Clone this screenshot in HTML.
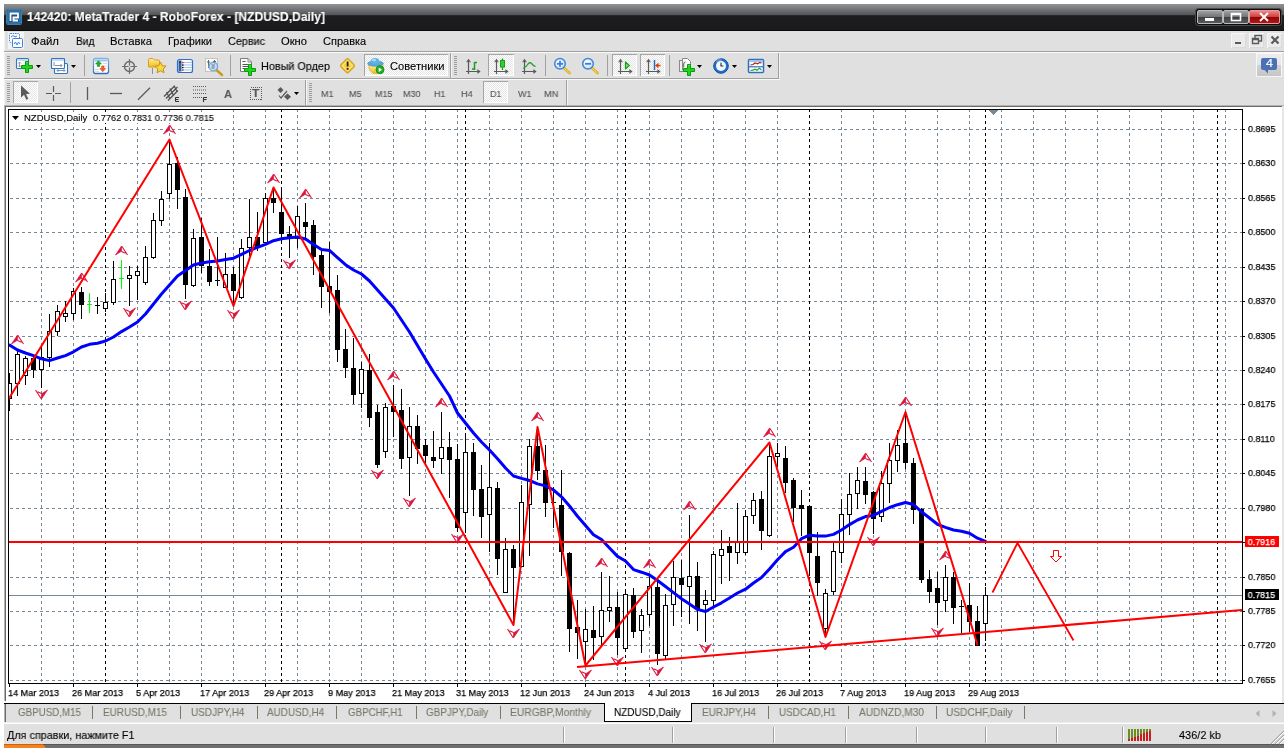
<!DOCTYPE html>
<html lang="ru"><head><meta charset="utf-8"><title>MetaTrader 4</title>
<style>
html,body{margin:0;padding:0;background:#fff;}
body{width:1288px;height:748px;position:relative;overflow:hidden;font-family:"Liberation Sans","DejaVu Sans",sans-serif;font-size:11px;color:#000;-webkit-text-stroke:0.25px currentColor;}
.abs{position:absolute;}
.pl{will-change:transform;position:absolute;left:1248px;font-size:9.8px;line-height:12px;height:12px;transform:scaleX(.915);transform-origin:0 0;white-space:nowrap;}
.pl.box{left:1245px;width:34px;padding-left:3px;height:11px;line-height:11px;color:#fff;}
.dl{will-change:transform;position:absolute;top:687px;font-size:9.8px;line-height:12px;white-space:nowrap;transform:scaleX(.93);transform-origin:0 0;}
.t{position:absolute;white-space:nowrap;will-change:transform;-webkit-text-stroke:0.12px currentColor;}
</style></head><body>

<svg width="1288" height="748" viewBox="0 0 1288 748" style="position:absolute;left:0;top:0" shape-rendering="crispEdges">
<defs><clipPath id="cc"><rect x="9" y="110" width="1233" height="573"/></clipPath></defs>
<g clip-path="url(#cc)">
<line x1="41.5" y1="109" x2="41.5" y2="683" stroke="#778899" stroke-width="1" stroke-dasharray="3 3"/>
<line x1="73.5" y1="109" x2="73.5" y2="683" stroke="#778899" stroke-width="1" stroke-dasharray="3 3"/>
<line x1="137.5" y1="109" x2="137.5" y2="683" stroke="#778899" stroke-width="1" stroke-dasharray="3 3"/>
<line x1="169.5" y1="109" x2="169.5" y2="683" stroke="#778899" stroke-width="1" stroke-dasharray="3 3"/>
<line x1="201.5" y1="109" x2="201.5" y2="683" stroke="#778899" stroke-width="1" stroke-dasharray="3 3"/>
<line x1="233.5" y1="109" x2="233.5" y2="683" stroke="#778899" stroke-width="1" stroke-dasharray="3 3"/>
<line x1="265.5" y1="109" x2="265.5" y2="683" stroke="#778899" stroke-width="1" stroke-dasharray="3 3"/>
<line x1="297.5" y1="109" x2="297.5" y2="683" stroke="#778899" stroke-width="1" stroke-dasharray="3 3"/>
<line x1="329.5" y1="109" x2="329.5" y2="683" stroke="#778899" stroke-width="1" stroke-dasharray="3 3"/>
<line x1="361.5" y1="109" x2="361.5" y2="683" stroke="#778899" stroke-width="1" stroke-dasharray="3 3"/>
<line x1="393.5" y1="109" x2="393.5" y2="683" stroke="#778899" stroke-width="1" stroke-dasharray="3 3"/>
<line x1="425.5" y1="109" x2="425.5" y2="683" stroke="#778899" stroke-width="1" stroke-dasharray="3 3"/>
<line x1="457.5" y1="109" x2="457.5" y2="683" stroke="#778899" stroke-width="1" stroke-dasharray="3 3"/>
<line x1="489.5" y1="109" x2="489.5" y2="683" stroke="#778899" stroke-width="1" stroke-dasharray="3 3"/>
<line x1="521.5" y1="109" x2="521.5" y2="683" stroke="#778899" stroke-width="1" stroke-dasharray="3 3"/>
<line x1="553.5" y1="109" x2="553.5" y2="683" stroke="#778899" stroke-width="1" stroke-dasharray="3 3"/>
<line x1="585.5" y1="109" x2="585.5" y2="683" stroke="#778899" stroke-width="1" stroke-dasharray="3 3"/>
<line x1="617.5" y1="109" x2="617.5" y2="683" stroke="#778899" stroke-width="1" stroke-dasharray="3 3"/>
<line x1="649.5" y1="109" x2="649.5" y2="683" stroke="#778899" stroke-width="1" stroke-dasharray="3 3"/>
<line x1="681.5" y1="109" x2="681.5" y2="683" stroke="#778899" stroke-width="1" stroke-dasharray="3 3"/>
<line x1="713.5" y1="109" x2="713.5" y2="683" stroke="#778899" stroke-width="1" stroke-dasharray="3 3"/>
<line x1="745.5" y1="109" x2="745.5" y2="683" stroke="#778899" stroke-width="1" stroke-dasharray="3 3"/>
<line x1="777.5" y1="109" x2="777.5" y2="683" stroke="#778899" stroke-width="1" stroke-dasharray="3 3"/>
<line x1="841.5" y1="109" x2="841.5" y2="683" stroke="#778899" stroke-width="1" stroke-dasharray="3 3"/>
<line x1="873.5" y1="109" x2="873.5" y2="683" stroke="#778899" stroke-width="1" stroke-dasharray="3 3"/>
<line x1="905.5" y1="109" x2="905.5" y2="683" stroke="#778899" stroke-width="1" stroke-dasharray="3 3"/>
<line x1="937.5" y1="109" x2="937.5" y2="683" stroke="#778899" stroke-width="1" stroke-dasharray="3 3"/>
<line x1="969.5" y1="109" x2="969.5" y2="683" stroke="#778899" stroke-width="1" stroke-dasharray="3 3"/>
<line x1="1001.5" y1="109" x2="1001.5" y2="683" stroke="#778899" stroke-width="1" stroke-dasharray="3 3"/>
<line x1="1033.5" y1="109" x2="1033.5" y2="683" stroke="#778899" stroke-width="1" stroke-dasharray="3 3"/>
<line x1="1065.5" y1="109" x2="1065.5" y2="683" stroke="#778899" stroke-width="1" stroke-dasharray="3 3"/>
<line x1="1097.5" y1="109" x2="1097.5" y2="683" stroke="#778899" stroke-width="1" stroke-dasharray="3 3"/>
<line x1="1129.5" y1="109" x2="1129.5" y2="683" stroke="#778899" stroke-width="1" stroke-dasharray="3 3"/>
<line x1="1161.5" y1="109" x2="1161.5" y2="683" stroke="#778899" stroke-width="1" stroke-dasharray="3 3"/>
<line x1="1193.5" y1="109" x2="1193.5" y2="683" stroke="#778899" stroke-width="1" stroke-dasharray="3 3"/>
<line x1="1225.5" y1="109" x2="1225.5" y2="683" stroke="#778899" stroke-width="1" stroke-dasharray="3 3"/>
<line x1="10" y1="129.5" x2="1242" y2="129.5" stroke="#778899" stroke-width="1" stroke-dasharray="3 3"/>
<line x1="10" y1="163.5" x2="1242" y2="163.5" stroke="#778899" stroke-width="1" stroke-dasharray="3 3"/>
<line x1="10" y1="198.5" x2="1242" y2="198.5" stroke="#778899" stroke-width="1" stroke-dasharray="3 3"/>
<line x1="10" y1="232.5" x2="1242" y2="232.5" stroke="#778899" stroke-width="1" stroke-dasharray="3 3"/>
<line x1="10" y1="267.5" x2="1242" y2="267.5" stroke="#778899" stroke-width="1" stroke-dasharray="3 3"/>
<line x1="10" y1="301.5" x2="1242" y2="301.5" stroke="#778899" stroke-width="1" stroke-dasharray="3 3"/>
<line x1="10" y1="336.5" x2="1242" y2="336.5" stroke="#778899" stroke-width="1" stroke-dasharray="3 3"/>
<line x1="10" y1="370.5" x2="1242" y2="370.5" stroke="#778899" stroke-width="1" stroke-dasharray="3 3"/>
<line x1="10" y1="404.5" x2="1242" y2="404.5" stroke="#778899" stroke-width="1" stroke-dasharray="3 3"/>
<line x1="10" y1="439.5" x2="1242" y2="439.5" stroke="#778899" stroke-width="1" stroke-dasharray="3 3"/>
<line x1="10" y1="473.5" x2="1242" y2="473.5" stroke="#778899" stroke-width="1" stroke-dasharray="3 3"/>
<line x1="10" y1="508.5" x2="1242" y2="508.5" stroke="#778899" stroke-width="1" stroke-dasharray="3 3"/>
<line x1="10" y1="542.5" x2="1242" y2="542.5" stroke="#778899" stroke-width="1" stroke-dasharray="3 3"/>
<line x1="10" y1="577.5" x2="1242" y2="577.5" stroke="#778899" stroke-width="1" stroke-dasharray="3 3"/>
<line x1="10" y1="611.5" x2="1242" y2="611.5" stroke="#778899" stroke-width="1" stroke-dasharray="3 3"/>
<line x1="10" y1="645.5" x2="1242" y2="645.5" stroke="#778899" stroke-width="1" stroke-dasharray="3 3"/>
<line x1="10" y1="680.5" x2="1242" y2="680.5" stroke="#778899" stroke-width="1" stroke-dasharray="3 3"/>
<line x1="105.5" y1="109" x2="105.5" y2="683" stroke="#000" stroke-width="1" stroke-dasharray="3 3"/>
<line x1="281.5" y1="109" x2="281.5" y2="683" stroke="#000" stroke-width="1" stroke-dasharray="3 3"/>
<line x1="465.5" y1="109" x2="465.5" y2="683" stroke="#000" stroke-width="1" stroke-dasharray="3 3"/>
<line x1="625.5" y1="109" x2="625.5" y2="683" stroke="#000" stroke-width="1" stroke-dasharray="3 3"/>
<line x1="809.5" y1="109" x2="809.5" y2="683" stroke="#000" stroke-width="1" stroke-dasharray="3 3"/>
<line x1="985.5" y1="109" x2="985.5" y2="683" stroke="#000" stroke-width="1" stroke-dasharray="3 3"/>
<line x1="1217.5" y1="109" x2="1217.5" y2="683" stroke="#000" stroke-width="1" stroke-dasharray="3 3"/>
<line x1="9" y1="595.5" x2="1242" y2="595.5" stroke="#778899" stroke-width="1"/>
<polygon points="988.5,110 998.5,110 993.5,115" fill="#778899"/>
<line x1="9.5" y1="373" x2="9.5" y2="411" stroke="#000" stroke-width="1"/>
<rect x="7.5" y="383.5" width="4" height="15" fill="#fff" stroke="#000" stroke-width="1"/>
<line x1="17.5" y1="349" x2="17.5" y2="396" stroke="#000" stroke-width="1"/>
<rect x="15.5" y="354.5" width="4" height="29" fill="#fff" stroke="#000" stroke-width="1"/>
<line x1="25.5" y1="356" x2="25.5" y2="385" stroke="#000" stroke-width="1"/>
<rect x="23.5" y="358.5" width="4" height="17" fill="#fff" stroke="#000" stroke-width="1"/>
<line x1="33.5" y1="356" x2="33.5" y2="378" stroke="#000" stroke-width="1"/>
<rect x="31" y="358" width="5" height="12" fill="#000"/>
<line x1="41.5" y1="345" x2="41.5" y2="388" stroke="#000" stroke-width="1"/>
<rect x="39.5" y="357.5" width="4" height="12" fill="#fff" stroke="#000" stroke-width="1"/>
<line x1="49.5" y1="314" x2="49.5" y2="367" stroke="#000" stroke-width="1"/>
<rect x="47.5" y="331.5" width="4" height="26" fill="#fff" stroke="#000" stroke-width="1"/>
<line x1="57.5" y1="305" x2="57.5" y2="336" stroke="#000" stroke-width="1"/>
<rect x="55.5" y="311.5" width="4" height="20" fill="#fff" stroke="#000" stroke-width="1"/>
<line x1="65.5" y1="301" x2="65.5" y2="322" stroke="#000" stroke-width="1"/>
<rect x="63.5" y="313.5" width="4" height="3" fill="#fff" stroke="#000" stroke-width="1"/>
<line x1="73.5" y1="288" x2="73.5" y2="320" stroke="#000" stroke-width="1"/>
<rect x="71.5" y="291.5" width="4" height="22" fill="#fff" stroke="#000" stroke-width="1"/>
<line x1="81.5" y1="287" x2="81.5" y2="319" stroke="#000" stroke-width="1"/>
<rect x="79" y="292" width="5" height="13" fill="#000"/>
<line x1="89.5" y1="293" x2="89.5" y2="313" stroke="#00ff00" stroke-width="1"/>
<line x1="87" y1="304.5" x2="92" y2="304.5" stroke="#00ff00" stroke-width="1"/>
<line x1="97.5" y1="297" x2="97.5" y2="314" stroke="#000" stroke-width="1"/>
<line x1="95" y1="305.5" x2="100" y2="305.5" stroke="#000" stroke-width="1"/>
<line x1="105.5" y1="293" x2="105.5" y2="312" stroke="#000" stroke-width="1"/>
<rect x="103.5" y="302.5" width="4" height="6" fill="#fff" stroke="#000" stroke-width="1"/>
<line x1="113.5" y1="261" x2="113.5" y2="305" stroke="#000" stroke-width="1"/>
<rect x="111.5" y="279.5" width="4" height="23" fill="#fff" stroke="#000" stroke-width="1"/>
<line x1="121.5" y1="260" x2="121.5" y2="289" stroke="#00ff00" stroke-width="1"/>
<line x1="119" y1="278.5" x2="124" y2="278.5" stroke="#00ff00" stroke-width="1"/>
<line x1="129.5" y1="266" x2="129.5" y2="306" stroke="#000" stroke-width="1"/>
<rect x="127.5" y="275.5" width="4" height="3" fill="#fff" stroke="#000" stroke-width="1"/>
<line x1="137.5" y1="266" x2="137.5" y2="300" stroke="#000" stroke-width="1"/>
<rect x="135.5" y="271.5" width="4" height="4" fill="#fff" stroke="#000" stroke-width="1"/>
<line x1="145.5" y1="246" x2="145.5" y2="285" stroke="#000" stroke-width="1"/>
<rect x="143.5" y="257.5" width="4" height="25" fill="#fff" stroke="#000" stroke-width="1"/>
<line x1="153.5" y1="213" x2="153.5" y2="259" stroke="#000" stroke-width="1"/>
<rect x="151.5" y="220.5" width="4" height="37" fill="#fff" stroke="#000" stroke-width="1"/>
<line x1="161.5" y1="191" x2="161.5" y2="226" stroke="#000" stroke-width="1"/>
<rect x="159.5" y="199.5" width="4" height="21" fill="#fff" stroke="#000" stroke-width="1"/>
<line x1="169.5" y1="139" x2="169.5" y2="199" stroke="#000" stroke-width="1"/>
<rect x="167.5" y="164.5" width="4" height="29" fill="#fff" stroke="#000" stroke-width="1"/>
<line x1="177.5" y1="157" x2="177.5" y2="209" stroke="#000" stroke-width="1"/>
<rect x="175" y="163" width="5" height="27" fill="#000"/>
<line x1="185.5" y1="189" x2="185.5" y2="299" stroke="#000" stroke-width="1"/>
<rect x="183" y="197" width="5" height="88" fill="#000"/>
<line x1="193.5" y1="229" x2="193.5" y2="287" stroke="#000" stroke-width="1"/>
<rect x="191.5" y="238.5" width="4" height="47" fill="#fff" stroke="#000" stroke-width="1"/>
<line x1="201.5" y1="218" x2="201.5" y2="273" stroke="#000" stroke-width="1"/>
<rect x="199" y="237" width="5" height="29" fill="#000"/>
<line x1="209.5" y1="249" x2="209.5" y2="286" stroke="#000" stroke-width="1"/>
<rect x="207" y="266" width="5" height="16" fill="#000"/>
<line x1="217.5" y1="237" x2="217.5" y2="286" stroke="#000" stroke-width="1"/>
<line x1="215" y1="280.5" x2="220" y2="280.5" stroke="#000" stroke-width="1"/>
<line x1="225.5" y1="253" x2="225.5" y2="288" stroke="#000" stroke-width="1"/>
<rect x="223.5" y="274.5" width="4" height="13" fill="#fff" stroke="#000" stroke-width="1"/>
<line x1="233.5" y1="267" x2="233.5" y2="307" stroke="#000" stroke-width="1"/>
<rect x="231" y="274" width="5" height="17" fill="#000"/>
<line x1="241.5" y1="239" x2="241.5" y2="299" stroke="#000" stroke-width="1"/>
<rect x="239.5" y="248.5" width="4" height="49" fill="#fff" stroke="#000" stroke-width="1"/>
<line x1="249.5" y1="199" x2="249.5" y2="256" stroke="#000" stroke-width="1"/>
<rect x="247.5" y="237.5" width="4" height="10" fill="#fff" stroke="#000" stroke-width="1"/>
<line x1="257.5" y1="212" x2="257.5" y2="251" stroke="#000" stroke-width="1"/>
<rect x="255" y="237" width="5" height="11" fill="#000"/>
<line x1="265.5" y1="193" x2="265.5" y2="244" stroke="#000" stroke-width="1"/>
<rect x="263.5" y="198.5" width="4" height="44" fill="#fff" stroke="#000" stroke-width="1"/>
<line x1="273.5" y1="187" x2="273.5" y2="213" stroke="#000" stroke-width="1"/>
<rect x="271" y="198" width="5" height="5" fill="#000"/>
<line x1="281.5" y1="187" x2="281.5" y2="241" stroke="#000" stroke-width="1"/>
<rect x="279" y="212" width="5" height="22" fill="#000"/>
<line x1="289.5" y1="226" x2="289.5" y2="258" stroke="#000" stroke-width="1"/>
<rect x="287" y="234" width="5" height="4" fill="#000"/>
<line x1="297.5" y1="206" x2="297.5" y2="248" stroke="#000" stroke-width="1"/>
<rect x="295.5" y="216.5" width="4" height="22" fill="#fff" stroke="#000" stroke-width="1"/>
<line x1="305.5" y1="203" x2="305.5" y2="239" stroke="#000" stroke-width="1"/>
<rect x="303" y="222" width="5" height="5" fill="#000"/>
<line x1="313.5" y1="220" x2="313.5" y2="275" stroke="#000" stroke-width="1"/>
<rect x="311" y="225" width="5" height="32" fill="#000"/>
<line x1="321.5" y1="251" x2="321.5" y2="308" stroke="#000" stroke-width="1"/>
<rect x="319" y="255" width="5" height="32" fill="#000"/>
<line x1="329.5" y1="242" x2="329.5" y2="313" stroke="#000" stroke-width="1"/>
<rect x="327" y="286" width="5" height="6" fill="#000"/>
<line x1="337.5" y1="275" x2="337.5" y2="362" stroke="#000" stroke-width="1"/>
<rect x="335" y="290" width="5" height="60" fill="#000"/>
<line x1="345.5" y1="329" x2="345.5" y2="378" stroke="#000" stroke-width="1"/>
<rect x="343" y="349" width="5" height="19" fill="#000"/>
<line x1="353.5" y1="338" x2="353.5" y2="404" stroke="#000" stroke-width="1"/>
<rect x="351" y="368" width="5" height="27" fill="#000"/>
<line x1="361.5" y1="362" x2="361.5" y2="408" stroke="#000" stroke-width="1"/>
<rect x="359.5" y="369.5" width="4" height="24" fill="#fff" stroke="#000" stroke-width="1"/>
<line x1="369.5" y1="354" x2="369.5" y2="427" stroke="#000" stroke-width="1"/>
<rect x="367" y="370" width="5" height="48" fill="#000"/>
<line x1="377.5" y1="405" x2="377.5" y2="468" stroke="#000" stroke-width="1"/>
<rect x="375" y="412" width="5" height="53" fill="#000"/>
<line x1="385.5" y1="403" x2="385.5" y2="458" stroke="#000" stroke-width="1"/>
<rect x="383.5" y="407.5" width="4" height="44" fill="#fff" stroke="#000" stroke-width="1"/>
<line x1="393.5" y1="385" x2="393.5" y2="437" stroke="#000" stroke-width="1"/>
<rect x="391" y="406" width="5" height="6" fill="#000"/>
<line x1="401.5" y1="389" x2="401.5" y2="469" stroke="#000" stroke-width="1"/>
<rect x="399" y="410" width="5" height="49" fill="#000"/>
<line x1="409.5" y1="407" x2="409.5" y2="496" stroke="#000" stroke-width="1"/>
<rect x="407.5" y="426.5" width="4" height="31" fill="#fff" stroke="#000" stroke-width="1"/>
<line x1="417.5" y1="415" x2="417.5" y2="464" stroke="#000" stroke-width="1"/>
<rect x="415" y="426" width="5" height="23" fill="#000"/>
<line x1="425.5" y1="439" x2="425.5" y2="463" stroke="#000" stroke-width="1"/>
<rect x="423" y="445" width="5" height="11" fill="#000"/>
<line x1="433.5" y1="431" x2="433.5" y2="468" stroke="#000" stroke-width="1"/>
<rect x="431" y="457" width="5" height="4" fill="#000"/>
<line x1="441.5" y1="412" x2="441.5" y2="474" stroke="#000" stroke-width="1"/>
<rect x="439.5" y="447.5" width="4" height="11" fill="#fff" stroke="#000" stroke-width="1"/>
<line x1="449.5" y1="432" x2="449.5" y2="498" stroke="#000" stroke-width="1"/>
<rect x="447" y="447" width="5" height="13" fill="#000"/>
<line x1="457.5" y1="444" x2="457.5" y2="532" stroke="#000" stroke-width="1"/>
<rect x="455" y="459" width="5" height="69" fill="#000"/>
<line x1="465.5" y1="433" x2="465.5" y2="533" stroke="#000" stroke-width="1"/>
<rect x="463.5" y="452.5" width="4" height="60" fill="#fff" stroke="#000" stroke-width="1"/>
<line x1="473.5" y1="443" x2="473.5" y2="516" stroke="#000" stroke-width="1"/>
<rect x="471" y="452" width="5" height="38" fill="#000"/>
<line x1="481.5" y1="465" x2="481.5" y2="538" stroke="#000" stroke-width="1"/>
<rect x="479" y="489" width="5" height="28" fill="#000"/>
<line x1="489.5" y1="443" x2="489.5" y2="552" stroke="#000" stroke-width="1"/>
<rect x="487.5" y="487.5" width="4" height="27" fill="#fff" stroke="#000" stroke-width="1"/>
<line x1="497.5" y1="482" x2="497.5" y2="575" stroke="#000" stroke-width="1"/>
<rect x="495" y="488" width="5" height="71" fill="#000"/>
<line x1="505.5" y1="538" x2="505.5" y2="593" stroke="#000" stroke-width="1"/>
<rect x="503.5" y="549.5" width="4" height="43" fill="#fff" stroke="#000" stroke-width="1"/>
<line x1="513.5" y1="545" x2="513.5" y2="626" stroke="#000" stroke-width="1"/>
<rect x="511" y="549" width="5" height="19" fill="#000"/>
<line x1="521.5" y1="485" x2="521.5" y2="567" stroke="#000" stroke-width="1"/>
<rect x="519.5" y="502.5" width="4" height="64" fill="#fff" stroke="#000" stroke-width="1"/>
<line x1="529.5" y1="439" x2="529.5" y2="556" stroke="#000" stroke-width="1"/>
<rect x="527.5" y="446.5" width="4" height="58" fill="#fff" stroke="#000" stroke-width="1"/>
<line x1="537.5" y1="427" x2="537.5" y2="480" stroke="#000" stroke-width="1"/>
<rect x="535" y="446" width="5" height="25" fill="#000"/>
<line x1="545.5" y1="445" x2="545.5" y2="517" stroke="#000" stroke-width="1"/>
<rect x="543" y="470" width="5" height="33" fill="#000"/>
<line x1="553.5" y1="487" x2="553.5" y2="528" stroke="#000" stroke-width="1"/>
<line x1="551" y1="502.5" x2="556" y2="502.5" stroke="#000" stroke-width="1"/>
<line x1="561.5" y1="470" x2="561.5" y2="576" stroke="#000" stroke-width="1"/>
<rect x="559" y="505" width="5" height="47" fill="#000"/>
<line x1="569.5" y1="552" x2="569.5" y2="652" stroke="#000" stroke-width="1"/>
<rect x="567" y="553" width="5" height="76" fill="#000"/>
<line x1="577.5" y1="600" x2="577.5" y2="659" stroke="#000" stroke-width="1"/>
<rect x="575" y="627" width="5" height="6" fill="#000"/>
<line x1="585.5" y1="609" x2="585.5" y2="666" stroke="#000" stroke-width="1"/>
<rect x="583.5" y="629.5" width="4" height="12" fill="#fff" stroke="#000" stroke-width="1"/>
<line x1="593.5" y1="606" x2="593.5" y2="660" stroke="#000" stroke-width="1"/>
<rect x="591" y="630" width="5" height="8" fill="#000"/>
<line x1="601.5" y1="572" x2="601.5" y2="646" stroke="#000" stroke-width="1"/>
<rect x="599.5" y="610.5" width="4" height="26" fill="#fff" stroke="#000" stroke-width="1"/>
<line x1="609.5" y1="576" x2="609.5" y2="622" stroke="#000" stroke-width="1"/>
<rect x="607.5" y="607.5" width="4" height="3" fill="#fff" stroke="#000" stroke-width="1"/>
<line x1="617.5" y1="592" x2="617.5" y2="655" stroke="#000" stroke-width="1"/>
<rect x="615" y="607" width="5" height="31" fill="#000"/>
<line x1="625.5" y1="589" x2="625.5" y2="652" stroke="#000" stroke-width="1"/>
<rect x="623.5" y="594.5" width="4" height="54" fill="#fff" stroke="#000" stroke-width="1"/>
<line x1="633.5" y1="588" x2="633.5" y2="638" stroke="#000" stroke-width="1"/>
<rect x="631" y="595" width="5" height="37" fill="#000"/>
<line x1="641.5" y1="609" x2="641.5" y2="653" stroke="#000" stroke-width="1"/>
<rect x="639.5" y="615.5" width="4" height="15" fill="#fff" stroke="#000" stroke-width="1"/>
<line x1="649.5" y1="576" x2="649.5" y2="626" stroke="#000" stroke-width="1"/>
<rect x="647.5" y="586.5" width="4" height="28" fill="#fff" stroke="#000" stroke-width="1"/>
<line x1="657.5" y1="581" x2="657.5" y2="665" stroke="#000" stroke-width="1"/>
<rect x="655" y="587" width="5" height="67" fill="#000"/>
<line x1="665.5" y1="594" x2="665.5" y2="659" stroke="#000" stroke-width="1"/>
<rect x="663.5" y="605.5" width="4" height="50" fill="#fff" stroke="#000" stroke-width="1"/>
<line x1="673.5" y1="561" x2="673.5" y2="626" stroke="#000" stroke-width="1"/>
<rect x="671.5" y="577.5" width="4" height="27" fill="#fff" stroke="#000" stroke-width="1"/>
<line x1="681.5" y1="560" x2="681.5" y2="617" stroke="#000" stroke-width="1"/>
<rect x="679" y="578" width="5" height="7" fill="#000"/>
<line x1="689.5" y1="515" x2="689.5" y2="624" stroke="#000" stroke-width="1"/>
<rect x="687.5" y="576.5" width="4" height="10" fill="#fff" stroke="#000" stroke-width="1"/>
<line x1="697.5" y1="562" x2="697.5" y2="631" stroke="#000" stroke-width="1"/>
<rect x="695" y="576" width="5" height="33" fill="#000"/>
<line x1="705.5" y1="590" x2="705.5" y2="642" stroke="#000" stroke-width="1"/>
<rect x="703.5" y="600.5" width="4" height="4" fill="#fff" stroke="#000" stroke-width="1"/>
<line x1="713.5" y1="551" x2="713.5" y2="606" stroke="#000" stroke-width="1"/>
<rect x="711.5" y="554.5" width="4" height="46" fill="#fff" stroke="#000" stroke-width="1"/>
<line x1="721.5" y1="530" x2="721.5" y2="584" stroke="#000" stroke-width="1"/>
<rect x="719.5" y="549.5" width="4" height="6" fill="#fff" stroke="#000" stroke-width="1"/>
<line x1="729.5" y1="537" x2="729.5" y2="581" stroke="#000" stroke-width="1"/>
<rect x="727" y="546" width="5" height="7" fill="#000"/>
<line x1="737.5" y1="503" x2="737.5" y2="564" stroke="#000" stroke-width="1"/>
<rect x="735.5" y="542.5" width="4" height="10" fill="#fff" stroke="#000" stroke-width="1"/>
<line x1="745.5" y1="510" x2="745.5" y2="555" stroke="#000" stroke-width="1"/>
<rect x="743.5" y="516.5" width="4" height="36" fill="#fff" stroke="#000" stroke-width="1"/>
<line x1="753.5" y1="493" x2="753.5" y2="524" stroke="#000" stroke-width="1"/>
<rect x="751.5" y="500.5" width="4" height="15" fill="#fff" stroke="#000" stroke-width="1"/>
<line x1="761.5" y1="491" x2="761.5" y2="550" stroke="#000" stroke-width="1"/>
<rect x="759" y="499" width="5" height="32" fill="#000"/>
<line x1="769.5" y1="443" x2="769.5" y2="537" stroke="#000" stroke-width="1"/>
<rect x="767.5" y="456.5" width="4" height="79" fill="#fff" stroke="#000" stroke-width="1"/>
<line x1="777.5" y1="443" x2="777.5" y2="467" stroke="#000" stroke-width="1"/>
<rect x="775.5" y="453.5" width="4" height="3" fill="#fff" stroke="#000" stroke-width="1"/>
<line x1="785.5" y1="446" x2="785.5" y2="493" stroke="#000" stroke-width="1"/>
<rect x="783" y="458" width="5" height="25" fill="#000"/>
<line x1="793.5" y1="478" x2="793.5" y2="522" stroke="#000" stroke-width="1"/>
<rect x="791" y="480" width="5" height="28" fill="#000"/>
<line x1="801.5" y1="490" x2="801.5" y2="536" stroke="#000" stroke-width="1"/>
<rect x="799" y="505" width="5" height="4" fill="#000"/>
<line x1="809.5" y1="505" x2="809.5" y2="576" stroke="#000" stroke-width="1"/>
<rect x="807" y="506" width="5" height="47" fill="#000"/>
<line x1="817.5" y1="532" x2="817.5" y2="596" stroke="#000" stroke-width="1"/>
<rect x="815" y="556" width="5" height="27" fill="#000"/>
<line x1="825.5" y1="589" x2="825.5" y2="635" stroke="#000" stroke-width="1"/>
<rect x="823.5" y="593.5" width="4" height="35" fill="#fff" stroke="#000" stroke-width="1"/>
<line x1="833.5" y1="543" x2="833.5" y2="595" stroke="#000" stroke-width="1"/>
<rect x="831.5" y="551.5" width="4" height="40" fill="#fff" stroke="#000" stroke-width="1"/>
<line x1="841.5" y1="499" x2="841.5" y2="563" stroke="#000" stroke-width="1"/>
<rect x="839.5" y="514.5" width="4" height="38" fill="#fff" stroke="#000" stroke-width="1"/>
<line x1="849.5" y1="473" x2="849.5" y2="535" stroke="#000" stroke-width="1"/>
<rect x="847.5" y="494.5" width="4" height="20" fill="#fff" stroke="#000" stroke-width="1"/>
<line x1="857.5" y1="467" x2="857.5" y2="509" stroke="#000" stroke-width="1"/>
<rect x="855.5" y="480.5" width="4" height="13" fill="#fff" stroke="#000" stroke-width="1"/>
<line x1="865.5" y1="467" x2="865.5" y2="504" stroke="#000" stroke-width="1"/>
<rect x="863" y="481" width="5" height="14" fill="#000"/>
<line x1="873.5" y1="491" x2="873.5" y2="534" stroke="#000" stroke-width="1"/>
<rect x="871" y="492" width="5" height="27" fill="#000"/>
<line x1="881.5" y1="471" x2="881.5" y2="522" stroke="#000" stroke-width="1"/>
<rect x="879.5" y="483.5" width="4" height="33" fill="#fff" stroke="#000" stroke-width="1"/>
<line x1="889.5" y1="443" x2="889.5" y2="503" stroke="#000" stroke-width="1"/>
<rect x="887.5" y="460.5" width="4" height="23" fill="#fff" stroke="#000" stroke-width="1"/>
<line x1="897.5" y1="430" x2="897.5" y2="472" stroke="#000" stroke-width="1"/>
<rect x="895.5" y="445.5" width="4" height="15" fill="#fff" stroke="#000" stroke-width="1"/>
<line x1="905.5" y1="412" x2="905.5" y2="469" stroke="#000" stroke-width="1"/>
<rect x="903" y="443" width="5" height="20" fill="#000"/>
<line x1="913.5" y1="458" x2="913.5" y2="524" stroke="#000" stroke-width="1"/>
<rect x="911" y="463" width="5" height="47" fill="#000"/>
<line x1="921.5" y1="508" x2="921.5" y2="583" stroke="#000" stroke-width="1"/>
<rect x="919" y="509" width="5" height="71" fill="#000"/>
<line x1="929.5" y1="570" x2="929.5" y2="603" stroke="#000" stroke-width="1"/>
<rect x="927" y="579" width="5" height="13" fill="#000"/>
<line x1="937.5" y1="572" x2="937.5" y2="625" stroke="#000" stroke-width="1"/>
<rect x="935" y="588" width="5" height="15" fill="#000"/>
<line x1="945.5" y1="565" x2="945.5" y2="612" stroke="#000" stroke-width="1"/>
<rect x="943.5" y="577.5" width="4" height="23" fill="#fff" stroke="#000" stroke-width="1"/>
<line x1="953.5" y1="572" x2="953.5" y2="624" stroke="#000" stroke-width="1"/>
<rect x="951" y="577" width="5" height="31" fill="#000"/>
<line x1="961.5" y1="600" x2="961.5" y2="633" stroke="#000" stroke-width="1"/>
<line x1="959" y1="606.5" x2="964" y2="606.5" stroke="#000" stroke-width="1"/>
<line x1="969.5" y1="583" x2="969.5" y2="632" stroke="#000" stroke-width="1"/>
<rect x="967" y="605" width="5" height="17" fill="#000"/>
<line x1="977.5" y1="606" x2="977.5" y2="646" stroke="#000" stroke-width="1"/>
<rect x="975" y="621" width="5" height="25" fill="#000"/>
<line x1="985.5" y1="587" x2="985.5" y2="641" stroke="#000" stroke-width="1"/>
<rect x="983.5" y="595.5" width="4" height="28" fill="#fff" stroke="#000" stroke-width="1"/>
</g>
<g clip-path="url(#cc)" shape-rendering="auto">
<polyline points="9.5,345 17.5,350 25.5,353 33.5,355.6 41.5,358.8 49.5,360.6 57.5,358 65.5,355.6 73.5,351.8 81.5,347 89.5,344.3 97.5,343.2 105.5,341 113.5,337 121.5,331.6 129.5,327 137.5,322 145.5,314 153.5,304 161.5,294 169.5,285 177.5,276 185.5,270.6 193.5,265 201.5,263 209.5,261.8 217.5,260.9 225.5,259.5 233.5,258.2 241.5,254.3 249.5,250.5 257.5,247.4 265.5,244.3 273.5,240.7 281.5,238.8 289.5,237.8 297.5,237 305.5,239 313.5,244.5 321.5,249.5 329.5,250.4 337.5,257.7 345.5,264.7 353.5,270 361.5,274 369.5,281 377.5,290 385.5,299 393.5,308 401.5,320 409.5,332 417.5,345.5 425.5,359 433.5,372 441.5,384 449.5,396 457.5,413 465.5,423 473.5,433 481.5,442 489.5,450 497.5,458.7 505.5,468 513.5,476 521.5,478.4 529.5,480.5 537.5,483.9 545.5,485.9 553.5,490 561.5,496.8 569.5,506 577.5,516.2 585.5,525.5 593.5,534.8 601.5,539.5 609.5,548 617.5,556.4 625.5,561 633.5,569.6 641.5,572.2 649.5,575 657.5,580.5 665.5,586.5 673.5,592.6 681.5,598.8 689.5,604 697.5,609.4 705.5,611.5 713.5,607 721.5,602.8 729.5,598 737.5,593 745.5,589.2 753.5,583 761.5,577.5 769.5,569 777.5,559.7 785.5,551.6 793.5,547.3 801.5,538.7 809.5,535.2 817.5,536.1 825.5,536.1 833.5,534.4 841.5,530 849.5,524.6 857.5,520 865.5,516.6 873.5,515.4 881.5,511.3 889.5,507.5 897.5,504.7 905.5,502.5 913.5,504.5 921.5,511.8 929.5,518 937.5,524.3 945.5,527.4 953.5,530 961.5,531.2 969.5,533.3 977.5,538.2 985.5,541.3" fill="none" stroke="#0000ff" stroke-width="3" stroke-linejoin="round" stroke-linecap="round"/>
<polyline points="8,400 169.5,139.5 233.5,306 273.5,187.5 513.5,625 537.5,427 585.5,665.5 769.5,442.5 825.5,637 905.5,412 977.5,645" fill="none" stroke="#ff0000" stroke-width="2" stroke-linejoin="round"/>
<rect x="9" y="541" width="1234" height="2" fill="#ff0000" shape-rendering="crispEdges"/>
<polyline points="992.5,592.5 1017.5,543 1073.5,640.5" fill="none" stroke="#ff0000" stroke-width="1.8"/>
<path d="M1053.5,550.5 h5 v6 h3 l-5.5,5.5 l-5.5,-5.5 h3 z" fill="#fff" stroke="#ff0000" stroke-width="1"/>
<g transform="translate(17.5,335)"><path d="M0,0 L-6,9 L-1,5.8 L0,5.5 Z" fill="#dc143c" stroke="#dc143c" stroke-width="0.7" stroke-linejoin="round"/><path d="M0.3,0.3 L6,9 M0,5.5 L4,7.2" fill="none" stroke="#dc143c" stroke-width="1.1"/></g>
<g transform="translate(41.5,399) scale(1,-1)"><path d="M0,0 L6,9 L1,5.8 L0,5.5 Z" fill="#dc143c" stroke="#dc143c" stroke-width="0.7" stroke-linejoin="round"/><path d="M-0.3,0.3 L-6,9 M0,5.5 L-4,7.2" fill="none" stroke="#dc143c" stroke-width="1.1"/></g>
<g transform="translate(81.5,273)"><path d="M0,0 L-6,9 L-1,5.8 L0,5.5 Z" fill="#dc143c" stroke="#dc143c" stroke-width="0.7" stroke-linejoin="round"/><path d="M0.3,0.3 L6,9 M0,5.5 L4,7.2" fill="none" stroke="#dc143c" stroke-width="1.1"/></g>
<g transform="translate(121.5,246)"><path d="M0,0 L-6,9 L-1,5.8 L0,5.5 Z" fill="#dc143c" stroke="#dc143c" stroke-width="0.7" stroke-linejoin="round"/><path d="M0.3,0.3 L6,9 M0,5.5 L4,7.2" fill="none" stroke="#dc143c" stroke-width="1.1"/></g>
<g transform="translate(129.5,317) scale(1,-1)"><path d="M0,0 L6,9 L1,5.8 L0,5.5 Z" fill="#dc143c" stroke="#dc143c" stroke-width="0.7" stroke-linejoin="round"/><path d="M-0.3,0.3 L-6,9 M0,5.5 L-4,7.2" fill="none" stroke="#dc143c" stroke-width="1.1"/></g>
<g transform="translate(169.5,125)"><path d="M0,0 L-6,9 L-1,5.8 L0,5.5 Z" fill="#dc143c" stroke="#dc143c" stroke-width="0.7" stroke-linejoin="round"/><path d="M0.3,0.3 L6,9 M0,5.5 L4,7.2" fill="none" stroke="#dc143c" stroke-width="1.1"/></g>
<g transform="translate(185.5,310) scale(1,-1)"><path d="M0,0 L6,9 L1,5.8 L0,5.5 Z" fill="#dc143c" stroke="#dc143c" stroke-width="0.7" stroke-linejoin="round"/><path d="M-0.3,0.3 L-6,9 M0,5.5 L-4,7.2" fill="none" stroke="#dc143c" stroke-width="1.1"/></g>
<g transform="translate(233.5,319) scale(1,-1)"><path d="M0,0 L6,9 L1,5.8 L0,5.5 Z" fill="#dc143c" stroke="#dc143c" stroke-width="0.7" stroke-linejoin="round"/><path d="M-0.3,0.3 L-6,9 M0,5.5 L-4,7.2" fill="none" stroke="#dc143c" stroke-width="1.1"/></g>
<g transform="translate(273.5,174)"><path d="M0,0 L-6,9 L-1,5.8 L0,5.5 Z" fill="#dc143c" stroke="#dc143c" stroke-width="0.7" stroke-linejoin="round"/><path d="M0.3,0.3 L6,9 M0,5.5 L4,7.2" fill="none" stroke="#dc143c" stroke-width="1.1"/></g>
<g transform="translate(289.5,269) scale(1,-1)"><path d="M0,0 L6,9 L1,5.8 L0,5.5 Z" fill="#dc143c" stroke="#dc143c" stroke-width="0.7" stroke-linejoin="round"/><path d="M-0.3,0.3 L-6,9 M0,5.5 L-4,7.2" fill="none" stroke="#dc143c" stroke-width="1.1"/></g>
<g transform="translate(305.5,189)"><path d="M0,0 L-6,9 L-1,5.8 L0,5.5 Z" fill="#dc143c" stroke="#dc143c" stroke-width="0.7" stroke-linejoin="round"/><path d="M0.3,0.3 L6,9 M0,5.5 L4,7.2" fill="none" stroke="#dc143c" stroke-width="1.1"/></g>
<g transform="translate(377.5,479) scale(1,-1)"><path d="M0,0 L6,9 L1,5.8 L0,5.5 Z" fill="#dc143c" stroke="#dc143c" stroke-width="0.7" stroke-linejoin="round"/><path d="M-0.3,0.3 L-6,9 M0,5.5 L-4,7.2" fill="none" stroke="#dc143c" stroke-width="1.1"/></g>
<g transform="translate(393.5,371)"><path d="M0,0 L-6,9 L-1,5.8 L0,5.5 Z" fill="#dc143c" stroke="#dc143c" stroke-width="0.7" stroke-linejoin="round"/><path d="M0.3,0.3 L6,9 M0,5.5 L4,7.2" fill="none" stroke="#dc143c" stroke-width="1.1"/></g>
<g transform="translate(409.5,507) scale(1,-1)"><path d="M0,0 L6,9 L1,5.8 L0,5.5 Z" fill="#dc143c" stroke="#dc143c" stroke-width="0.7" stroke-linejoin="round"/><path d="M-0.3,0.3 L-6,9 M0,5.5 L-4,7.2" fill="none" stroke="#dc143c" stroke-width="1.1"/></g>
<g transform="translate(441.5,398)"><path d="M0,0 L-6,9 L-1,5.8 L0,5.5 Z" fill="#dc143c" stroke="#dc143c" stroke-width="0.7" stroke-linejoin="round"/><path d="M0.3,0.3 L6,9 M0,5.5 L4,7.2" fill="none" stroke="#dc143c" stroke-width="1.1"/></g>
<g transform="translate(457.5,543) scale(1,-1)"><path d="M0,0 L6,9 L1,5.8 L0,5.5 Z" fill="#dc143c" stroke="#dc143c" stroke-width="0.7" stroke-linejoin="round"/><path d="M-0.3,0.3 L-6,9 M0,5.5 L-4,7.2" fill="none" stroke="#dc143c" stroke-width="1.1"/></g>
<g transform="translate(513.5,638) scale(1,-1)"><path d="M0,0 L6,9 L1,5.8 L0,5.5 Z" fill="#dc143c" stroke="#dc143c" stroke-width="0.7" stroke-linejoin="round"/><path d="M-0.3,0.3 L-6,9 M0,5.5 L-4,7.2" fill="none" stroke="#dc143c" stroke-width="1.1"/></g>
<g transform="translate(537.5,412)"><path d="M0,0 L-6,9 L-1,5.8 L0,5.5 Z" fill="#dc143c" stroke="#dc143c" stroke-width="0.7" stroke-linejoin="round"/><path d="M0.3,0.3 L6,9 M0,5.5 L4,7.2" fill="none" stroke="#dc143c" stroke-width="1.1"/></g>
<g transform="translate(585.5,679) scale(1,-1)"><path d="M0,0 L6,9 L1,5.8 L0,5.5 Z" fill="#dc143c" stroke="#dc143c" stroke-width="0.7" stroke-linejoin="round"/><path d="M-0.3,0.3 L-6,9 M0,5.5 L-4,7.2" fill="none" stroke="#dc143c" stroke-width="1.1"/></g>
<g transform="translate(601.5,558)"><path d="M0,0 L-6,9 L-1,5.8 L0,5.5 Z" fill="#dc143c" stroke="#dc143c" stroke-width="0.7" stroke-linejoin="round"/><path d="M0.3,0.3 L6,9 M0,5.5 L4,7.2" fill="none" stroke="#dc143c" stroke-width="1.1"/></g>
<g transform="translate(617.5,666) scale(1,-1)"><path d="M0,0 L6,9 L1,5.8 L0,5.5 Z" fill="#dc143c" stroke="#dc143c" stroke-width="0.7" stroke-linejoin="round"/><path d="M-0.3,0.3 L-6,9 M0,5.5 L-4,7.2" fill="none" stroke="#dc143c" stroke-width="1.1"/></g>
<g transform="translate(649.5,559)"><path d="M0,0 L-6,9 L-1,5.8 L0,5.5 Z" fill="#dc143c" stroke="#dc143c" stroke-width="0.7" stroke-linejoin="round"/><path d="M0.3,0.3 L6,9 M0,5.5 L4,7.2" fill="none" stroke="#dc143c" stroke-width="1.1"/></g>
<g transform="translate(657.5,676) scale(1,-1)"><path d="M0,0 L6,9 L1,5.8 L0,5.5 Z" fill="#dc143c" stroke="#dc143c" stroke-width="0.7" stroke-linejoin="round"/><path d="M-0.3,0.3 L-6,9 M0,5.5 L-4,7.2" fill="none" stroke="#dc143c" stroke-width="1.1"/></g>
<g transform="translate(689.5,501)"><path d="M0,0 L-6,9 L-1,5.8 L0,5.5 Z" fill="#dc143c" stroke="#dc143c" stroke-width="0.7" stroke-linejoin="round"/><path d="M0.3,0.3 L6,9 M0,5.5 L4,7.2" fill="none" stroke="#dc143c" stroke-width="1.1"/></g>
<g transform="translate(705.5,653) scale(1,-1)"><path d="M0,0 L6,9 L1,5.8 L0,5.5 Z" fill="#dc143c" stroke="#dc143c" stroke-width="0.7" stroke-linejoin="round"/><path d="M-0.3,0.3 L-6,9 M0,5.5 L-4,7.2" fill="none" stroke="#dc143c" stroke-width="1.1"/></g>
<g transform="translate(769.5,428)"><path d="M0,0 L-6,9 L-1,5.8 L0,5.5 Z" fill="#dc143c" stroke="#dc143c" stroke-width="0.7" stroke-linejoin="round"/><path d="M0.3,0.3 L6,9 M0,5.5 L4,7.2" fill="none" stroke="#dc143c" stroke-width="1.1"/></g>
<g transform="translate(825.5,650) scale(1,-1)"><path d="M0,0 L6,9 L1,5.8 L0,5.5 Z" fill="#dc143c" stroke="#dc143c" stroke-width="0.7" stroke-linejoin="round"/><path d="M-0.3,0.3 L-6,9 M0,5.5 L-4,7.2" fill="none" stroke="#dc143c" stroke-width="1.1"/></g>
<g transform="translate(865.5,453)"><path d="M0,0 L-6,9 L-1,5.8 L0,5.5 Z" fill="#dc143c" stroke="#dc143c" stroke-width="0.7" stroke-linejoin="round"/><path d="M0.3,0.3 L6,9 M0,5.5 L4,7.2" fill="none" stroke="#dc143c" stroke-width="1.1"/></g>
<g transform="translate(873.5,546) scale(1,-1)"><path d="M0,0 L6,9 L1,5.8 L0,5.5 Z" fill="#dc143c" stroke="#dc143c" stroke-width="0.7" stroke-linejoin="round"/><path d="M-0.3,0.3 L-6,9 M0,5.5 L-4,7.2" fill="none" stroke="#dc143c" stroke-width="1.1"/></g>
<g transform="translate(905.5,397)"><path d="M0,0 L-6,9 L-1,5.8 L0,5.5 Z" fill="#dc143c" stroke="#dc143c" stroke-width="0.7" stroke-linejoin="round"/><path d="M0.3,0.3 L6,9 M0,5.5 L4,7.2" fill="none" stroke="#dc143c" stroke-width="1.1"/></g>
<g transform="translate(937.5,637) scale(1,-1)"><path d="M0,0 L6,9 L1,5.8 L0,5.5 Z" fill="#dc143c" stroke="#dc143c" stroke-width="0.7" stroke-linejoin="round"/><path d="M-0.3,0.3 L-6,9 M0,5.5 L-4,7.2" fill="none" stroke="#dc143c" stroke-width="1.1"/></g>
<g transform="translate(945.5,551)"><path d="M0,0 L-6,9 L-1,5.8 L0,5.5 Z" fill="#dc143c" stroke="#dc143c" stroke-width="0.7" stroke-linejoin="round"/><path d="M0.3,0.3 L6,9 M0,5.5 L4,7.2" fill="none" stroke="#dc143c" stroke-width="1.1"/></g>
<line x1="577" y1="667" x2="1242" y2="610" stroke="#ff0000" stroke-width="2"/>
</g>
<rect x="22" y="114" width="193" height="9" fill="#fff"/>
<path d="M12,116 h7 l-3.5,4 z" fill="#000" shape-rendering="auto"/>
<path d="M8.5,109.5 H1242.5 V683.5 H8.5 Z" fill="none" stroke="#000" stroke-width="1"/>
<line x1="1243" y1="129.5" x2="1245" y2="129.5" stroke="#000" stroke-width="1"/>
<line x1="1243" y1="163.5" x2="1245" y2="163.5" stroke="#000" stroke-width="1"/>
<line x1="1243" y1="198.5" x2="1245" y2="198.5" stroke="#000" stroke-width="1"/>
<line x1="1243" y1="232.5" x2="1245" y2="232.5" stroke="#000" stroke-width="1"/>
<line x1="1243" y1="267.5" x2="1245" y2="267.5" stroke="#000" stroke-width="1"/>
<line x1="1243" y1="301.5" x2="1245" y2="301.5" stroke="#000" stroke-width="1"/>
<line x1="1243" y1="336.5" x2="1245" y2="336.5" stroke="#000" stroke-width="1"/>
<line x1="1243" y1="370.5" x2="1245" y2="370.5" stroke="#000" stroke-width="1"/>
<line x1="1243" y1="404.5" x2="1245" y2="404.5" stroke="#000" stroke-width="1"/>
<line x1="1243" y1="439.5" x2="1245" y2="439.5" stroke="#000" stroke-width="1"/>
<line x1="1243" y1="473.5" x2="1245" y2="473.5" stroke="#000" stroke-width="1"/>
<line x1="1243" y1="508.5" x2="1245" y2="508.5" stroke="#000" stroke-width="1"/>
<line x1="1243" y1="542.5" x2="1245" y2="542.5" stroke="#000" stroke-width="1"/>
<line x1="1243" y1="577.5" x2="1245" y2="577.5" stroke="#000" stroke-width="1"/>
<line x1="1243" y1="611.5" x2="1245" y2="611.5" stroke="#000" stroke-width="1"/>
<line x1="1243" y1="645.5" x2="1245" y2="645.5" stroke="#000" stroke-width="1"/>
<line x1="1243" y1="680.5" x2="1245" y2="680.5" stroke="#000" stroke-width="1"/>
<line x1="9.5" y1="684" x2="9.5" y2="687" stroke="#000" stroke-width="1"/>
<line x1="73.5" y1="684" x2="73.5" y2="687" stroke="#000" stroke-width="1"/>
<line x1="137.5" y1="684" x2="137.5" y2="687" stroke="#000" stroke-width="1"/>
<line x1="201.5" y1="684" x2="201.5" y2="687" stroke="#000" stroke-width="1"/>
<line x1="265.5" y1="684" x2="265.5" y2="687" stroke="#000" stroke-width="1"/>
<line x1="329.5" y1="684" x2="329.5" y2="687" stroke="#000" stroke-width="1"/>
<line x1="393.5" y1="684" x2="393.5" y2="687" stroke="#000" stroke-width="1"/>
<line x1="457.5" y1="684" x2="457.5" y2="687" stroke="#000" stroke-width="1"/>
<line x1="521.5" y1="684" x2="521.5" y2="687" stroke="#000" stroke-width="1"/>
<line x1="585.5" y1="684" x2="585.5" y2="687" stroke="#000" stroke-width="1"/>
<line x1="649.5" y1="684" x2="649.5" y2="687" stroke="#000" stroke-width="1"/>
<line x1="713.5" y1="684" x2="713.5" y2="687" stroke="#000" stroke-width="1"/>
<line x1="777.5" y1="684" x2="777.5" y2="687" stroke="#000" stroke-width="1"/>
<line x1="841.5" y1="684" x2="841.5" y2="687" stroke="#000" stroke-width="1"/>
<line x1="905.5" y1="684" x2="905.5" y2="687" stroke="#000" stroke-width="1"/>
<line x1="969.5" y1="684" x2="969.5" y2="687" stroke="#000" stroke-width="1"/>
</svg>
<div class="pl" style="top:122.5px">0.8695</div>
<div class="pl" style="top:156.5px">0.8630</div>
<div class="pl" style="top:191.5px">0.8565</div>
<div class="pl" style="top:225.5px">0.8500</div>
<div class="pl" style="top:260.5px">0.8435</div>
<div class="pl" style="top:294.5px">0.8370</div>
<div class="pl" style="top:329.5px">0.8305</div>
<div class="pl" style="top:363.5px">0.8240</div>
<div class="pl" style="top:397.5px">0.8175</div>
<div class="pl" style="top:432.5px">0.8110</div>
<div class="pl" style="top:466.5px">0.8045</div>
<div class="pl" style="top:501.5px">0.7980</div>
<div class="pl" style="top:570.5px">0.7850</div>
<div class="pl" style="top:604.5px">0.7785</div>
<div class="pl" style="top:638.5px">0.7720</div>
<div class="pl" style="top:673.5px">0.7655</div>
<div class="pl box" style="top:536px;background:#ff0000">0.7916</div>
<div class="pl box" style="top:589px;background:#000">0.7815</div>
<div class="dl" style="left:8px">14 Mar 2013</div>
<div class="dl" style="left:72px">26 Mar 2013</div>
<div class="dl" style="left:136px">5 Apr 2013</div>
<div class="dl" style="left:200px">17 Apr 2013</div>
<div class="dl" style="left:264px">29 Apr 2013</div>
<div class="dl" style="left:328px">9 May 2013</div>
<div class="dl" style="left:392px">21 May 2013</div>
<div class="dl" style="left:456px">31 May 2013</div>
<div class="dl" style="left:520px">12 Jun 2013</div>
<div class="dl" style="left:584px">24 Jun 2013</div>
<div class="dl" style="left:648px">4 Jul 2013</div>
<div class="dl" style="left:712px">16 Jul 2013</div>
<div class="dl" style="left:776px">26 Jul 2013</div>
<div class="dl" style="left:840px">7 Aug 2013</div>
<div class="dl" style="left:904px">19 Aug 2013</div>
<div class="dl" style="left:968px">29 Aug 2013</div>
<svg width="1288" height="748" viewBox="0 0 1288 748" style="position:absolute;left:0;top:0">
<defs>
<pattern id="chk" width="2" height="2" patternUnits="userSpaceOnUse"><rect width="2" height="2" fill="#ffffff"/><rect width="1" height="1" fill="#e4e4e4"/><rect x="1" y="1" width="1" height="1" fill="#e4e4e4"/></pattern>
<linearGradient id="tb" x1="0" y1="0" x2="0" y2="1"><stop offset="0" stop-color="#929396"/><stop offset=".41" stop-color="#525357"/><stop offset=".43" stop-color="#1d1d1f"/><stop offset=".95" stop-color="#1a1a1c"/><stop offset="1" stop-color="#000"/></linearGradient>
<linearGradient id="cb" x1="0" y1="0" x2="0" y2="1"><stop offset="0" stop-color="#a2a3a5"/><stop offset=".48" stop-color="#747577"/><stop offset=".5" stop-color="#3e3f41"/><stop offset="1" stop-color="#5a5b5d"/></linearGradient>
<linearGradient id="cr" x1="0" y1="0" x2="0" y2="1"><stop offset="0" stop-color="#f08a8a"/><stop offset=".48" stop-color="#d04040"/><stop offset=".5" stop-color="#8e0505"/><stop offset="1" stop-color="#b01818"/></linearGradient>
<linearGradient id="chat" x1="0" y1="0" x2="0" y2="1"><stop offset="0" stop-color="#ececec"/><stop offset=".5" stop-color="#e6e6e6"/><stop offset=".52" stop-color="#d2d2d2"/><stop offset="1" stop-color="#c6c6c6"/></linearGradient>
<linearGradient id="blu" x1="0" y1="0" x2="0" y2="1"><stop offset="0" stop-color="#7fb2ea"/><stop offset="1" stop-color="#2f6fc0"/></linearGradient>
<linearGradient id="yel" x1="0" y1="0" x2="0" y2="1"><stop offset="0" stop-color="#fff2a0"/><stop offset="1" stop-color="#f0b820"/></linearGradient>
<radialGradient id="lens" cx=".4" cy=".35" r=".7"><stop offset="0" stop-color="#ffffff"/><stop offset="1" stop-color="#bcdcf8"/></radialGradient>
</defs>
<g shape-rendering="crispEdges">
<rect x="4" y="4" width="1280" height="27" fill="url(#tb)"/>
<rect x="4" y="31" width="1280" height="74" fill="#e0e0e0"/>
<rect x="4" y="31" width="1" height="74" fill="#f2f2f2"/>
<rect x="4" y="51" width="1280" height="1" fill="#a0a0a0"/><rect x="4" y="52" width="1280" height="1" fill="#fafafa"/>
<rect x="4" y="78" width="775" height="1" fill="#a0a0a0"/><rect x="4" y="79" width="776" height="1" fill="#fafafa"/>
<rect x="778" y="53" width="1" height="25" fill="#a0a0a0"/><rect x="779" y="53" width="1" height="25" fill="#f4f4f4"/>
<rect x="450" y="53" width="1" height="25" fill="#a0a0a0"/><rect x="451" y="53" width="1" height="25" fill="#f4f4f4"/>
<rect x="305" y="80" width="1" height="25" fill="#a0a0a0"/><rect x="306" y="80" width="1" height="25" fill="#f4f4f4"/>
<rect x="566" y="80" width="1" height="25" fill="#a0a0a0"/><rect x="567" y="80" width="1" height="25" fill="#f4f4f4"/>
<rect x="4" y="105" width="1280" height="1" fill="#b4b4b4"/>
<rect x="4" y="106" width="1278" height="1" fill="#6b6b60"/>
<rect x="4" y="106" width="1" height="595" fill="#b4b4b4"/>
<rect x="5" y="106" width="1" height="595" fill="#6b6b60"/>
<rect x="1282" y="106" width="2" height="598" fill="#e6e6e6"/>
<rect x="4" y="704" width="1280" height="40" fill="#e0e0e0"/>
<rect x="4" y="703" width="1280" height="1" fill="#000"/>
<rect x="4" y="704" width="1" height="18" fill="#b4b4b4"/><rect x="5" y="704" width="1" height="18" fill="#6b6b60"/>
<rect x="4" y="722" width="1280" height="1" fill="#ececec"/><rect x="4" y="723" width="1280" height="1" fill="#ffffff"/>
<rect x="4" y="744" width="1280" height="4" fill="#6f6f6f"/>
<rect x="4" y="744" width="1280" height="1" fill="#585858"/>
<rect x="604" y="703" width="88" height="19" fill="#000"/><rect x="605" y="703" width="86" height="18" fill="#fff"/>
<rect x="92" y="706" width="1" height="13" fill="#7a786a"/>
<rect x="180" y="706" width="1" height="13" fill="#7a786a"/>
<rect x="257" y="706" width="1" height="13" fill="#7a786a"/>
<rect x="336" y="706" width="1" height="13" fill="#7a786a"/>
<rect x="416" y="706" width="1" height="13" fill="#7a786a"/>
<rect x="500" y="706" width="1" height="13" fill="#7a786a"/>
<rect x="768" y="706" width="1" height="13" fill="#7a786a"/>
<rect x="848" y="706" width="1" height="13" fill="#7a786a"/>
<rect x="936" y="706" width="1" height="13" fill="#7a786a"/>
<rect x="1024" y="706" width="1" height="13" fill="#7a786a"/>
<rect x="563" y="727" width="1" height="16" fill="#a0a0a0"/><rect x="564" y="727" width="1" height="16" fill="#fff"/>
<rect x="672" y="727" width="1" height="16" fill="#a0a0a0"/><rect x="673" y="727" width="1" height="16" fill="#fff"/>
<rect x="773" y="727" width="1" height="16" fill="#a0a0a0"/><rect x="774" y="727" width="1" height="16" fill="#fff"/>
<rect x="845" y="727" width="1" height="16" fill="#a0a0a0"/><rect x="846" y="727" width="1" height="16" fill="#fff"/>
<rect x="916" y="727" width="1" height="16" fill="#a0a0a0"/><rect x="917" y="727" width="1" height="16" fill="#fff"/>
<rect x="985" y="727" width="1" height="16" fill="#a0a0a0"/><rect x="986" y="727" width="1" height="16" fill="#fff"/>
<rect x="1056" y="727" width="1" height="16" fill="#a0a0a0"/><rect x="1057" y="727" width="1" height="16" fill="#fff"/>
<rect x="1122" y="727" width="1" height="16" fill="#a0a0a0"/><rect x="1123" y="727" width="1" height="16" fill="#fff"/>
<rect x="1128" y="729" width="2" height="10" fill="#6b8e23"/><rect x="1128" y="739" width="2" height="2" fill="#c81e1e"/>
<rect x="1131" y="729" width="2" height="9" fill="#6b8e23"/><rect x="1131" y="738" width="2" height="3" fill="#c81e1e"/>
<rect x="1134" y="729" width="2" height="8" fill="#6b8e23"/><rect x="1134" y="737" width="2" height="4" fill="#c81e1e"/>
<rect x="1137" y="729" width="2" height="7" fill="#6b8e23"/><rect x="1137" y="736" width="2" height="5" fill="#c81e1e"/>
<rect x="1140" y="729" width="2" height="5" fill="#6b8e23"/><rect x="1140" y="734" width="2" height="7" fill="#c81e1e"/>
<rect x="1143" y="729" width="2" height="4" fill="#6b8e23"/><rect x="1143" y="733" width="2" height="8" fill="#c81e1e"/>
<rect x="1146" y="729" width="2" height="3" fill="#6b8e23"/><rect x="1146" y="732" width="2" height="9" fill="#c81e1e"/>
<rect x="1149" y="729" width="2" height="2" fill="#6b8e23"/><rect x="1149" y="731" width="2" height="10" fill="#c81e1e"/>
<rect x="7" y="56" width="3" height="1" fill="#9c9c9c"/><rect x="7" y="58" width="3" height="1" fill="#9c9c9c"/><rect x="7" y="60" width="3" height="1" fill="#9c9c9c"/><rect x="7" y="62" width="3" height="1" fill="#9c9c9c"/><rect x="7" y="64" width="3" height="1" fill="#9c9c9c"/><rect x="7" y="66" width="3" height="1" fill="#9c9c9c"/><rect x="7" y="68" width="3" height="1" fill="#9c9c9c"/><rect x="7" y="70" width="3" height="1" fill="#9c9c9c"/><rect x="7" y="72" width="3" height="1" fill="#9c9c9c"/><rect x="7" y="74" width="3" height="1" fill="#9c9c9c"/>
<rect x="454" y="56" width="3" height="1" fill="#9c9c9c"/><rect x="454" y="58" width="3" height="1" fill="#9c9c9c"/><rect x="454" y="60" width="3" height="1" fill="#9c9c9c"/><rect x="454" y="62" width="3" height="1" fill="#9c9c9c"/><rect x="454" y="64" width="3" height="1" fill="#9c9c9c"/><rect x="454" y="66" width="3" height="1" fill="#9c9c9c"/><rect x="454" y="68" width="3" height="1" fill="#9c9c9c"/><rect x="454" y="70" width="3" height="1" fill="#9c9c9c"/><rect x="454" y="72" width="3" height="1" fill="#9c9c9c"/><rect x="454" y="74" width="3" height="1" fill="#9c9c9c"/>
<rect x="7" y="83" width="3" height="1" fill="#9c9c9c"/><rect x="7" y="85" width="3" height="1" fill="#9c9c9c"/><rect x="7" y="87" width="3" height="1" fill="#9c9c9c"/><rect x="7" y="89" width="3" height="1" fill="#9c9c9c"/><rect x="7" y="91" width="3" height="1" fill="#9c9c9c"/><rect x="7" y="93" width="3" height="1" fill="#9c9c9c"/><rect x="7" y="95" width="3" height="1" fill="#9c9c9c"/><rect x="7" y="97" width="3" height="1" fill="#9c9c9c"/><rect x="7" y="99" width="3" height="1" fill="#9c9c9c"/><rect x="7" y="101" width="3" height="1" fill="#9c9c9c"/>
<rect x="309" y="83" width="3" height="1" fill="#9c9c9c"/><rect x="309" y="85" width="3" height="1" fill="#9c9c9c"/><rect x="309" y="87" width="3" height="1" fill="#9c9c9c"/><rect x="309" y="89" width="3" height="1" fill="#9c9c9c"/><rect x="309" y="91" width="3" height="1" fill="#9c9c9c"/><rect x="309" y="93" width="3" height="1" fill="#9c9c9c"/><rect x="309" y="95" width="3" height="1" fill="#9c9c9c"/><rect x="309" y="97" width="3" height="1" fill="#9c9c9c"/><rect x="309" y="99" width="3" height="1" fill="#9c9c9c"/><rect x="309" y="101" width="3" height="1" fill="#9c9c9c"/>
<rect x="84" y="55" width="1" height="21" fill="#a0a0a0"/>
<rect x="230" y="55" width="1" height="21" fill="#a0a0a0"/>
<rect x="545" y="55" width="1" height="21" fill="#a0a0a0"/>
<rect x="607" y="55" width="1" height="21" fill="#a0a0a0"/>
<rect x="669" y="55" width="1" height="21" fill="#a0a0a0"/>
<rect x="70" y="82" width="1" height="21" fill="#a0a0a0"/>
<rect x="13" y="81" width="25" height="22" fill="url(#chk)"/><path d="M13.5,102.5 V81.5 H37.5" fill="none" stroke="#a6a6a6"/><path d="M13.5,102.5 H37.5 V81.5" fill="none" stroke="#ffffff"/>
<rect x="364" y="54" width="84" height="22" fill="url(#chk)"/><path d="M364.5,75.5 V54.5 H447.5" fill="none" stroke="#a6a6a6"/><path d="M364.5,75.5 H447.5 V54.5" fill="none" stroke="#ffffff"/>
<rect x="488" y="54" width="26" height="22" fill="url(#chk)"/><path d="M488.5,75.5 V54.5 H513.5" fill="none" stroke="#a6a6a6"/><path d="M488.5,75.5 H513.5 V54.5" fill="none" stroke="#ffffff"/>
<rect x="612" y="54" width="25" height="22" fill="url(#chk)"/><path d="M612.5,75.5 V54.5 H636.5" fill="none" stroke="#a6a6a6"/><path d="M612.5,75.5 H636.5 V54.5" fill="none" stroke="#ffffff"/>
<rect x="640" y="54" width="25" height="22" fill="url(#chk)"/><path d="M640.5,75.5 V54.5 H664.5" fill="none" stroke="#a6a6a6"/><path d="M640.5,75.5 H664.5 V54.5" fill="none" stroke="#ffffff"/>
<rect x="483" y="81" width="25" height="22" fill="url(#chk)"/><path d="M483.5,102.5 V81.5 H507.5" fill="none" stroke="#a6a6a6"/><path d="M483.5,102.5 H507.5 V81.5" fill="none" stroke="#ffffff"/>
<rect x="1231" y="33" width="15" height="15" fill="#ebebeb"/><path d="M1231.5,47.5 V33.5 H1245.5" fill="none" stroke="#f6f6f6"/><path d="M1231.5,47.5 H1245.5 V33.5" fill="none" stroke="#dadada"/>
<rect x="1249" y="33" width="15" height="15" fill="#ebebeb"/><path d="M1249.5,47.5 V33.5 H1263.5" fill="none" stroke="#f6f6f6"/><path d="M1249.5,47.5 H1263.5 V33.5" fill="none" stroke="#dadada"/>
<rect x="1267" y="33" width="15" height="15" fill="#ebebeb"/><path d="M1267.5,47.5 V33.5 H1281.5" fill="none" stroke="#f6f6f6"/><path d="M1267.5,47.5 H1281.5 V33.5" fill="none" stroke="#dadada"/>
<rect x="8" y="32" width="16" height="17" fill="#f4f4f4"/>
<rect x="1256" y="53" width="26" height="23" fill="url(#chat)"/><path d="M1256.5,76 V53.5 H1281.5 V76" fill="none" stroke="#f8f8f8"/><rect x="1256" y="76" width="26" height="1" fill="#f4f4f4"/>
</g>
<g shape-rendering="auto">
<path d="M4,748 V744.5 H43 L46,748 Z" fill="#f58220"/><path d="M4,744.5 H43" stroke="#c86410" stroke-width="1"/>
<rect x="1195.5" y="8.5" width="86" height="17" rx="3" fill="#0c0c0d" stroke="#4a4b4e" stroke-width="1"/>
<rect x="1197.5" y="10.5" width="25" height="13" rx="1.5" fill="url(#cb)" stroke="#b9babc" stroke-width="1"/>
<rect x="1223.5" y="10.5" width="25" height="13" rx="1.5" fill="url(#cb)" stroke="#b9babc" stroke-width="1"/>
<rect x="1249.5" y="10.5" width="30" height="13" rx="1.5" fill="url(#cr)" stroke="#e89a9a" stroke-width="1"/>
<rect x="1205" y="18" width="9" height="3" fill="#fff"/>
<path d="M1231.5,13.5 h9 v7 h-9 z M1231.5,14.5 h9" fill="none" stroke="#fff" stroke-width="1.6"/>
<path d="M1260,13 l8,8 M1268,13 l-8,8" stroke="#fff" stroke-width="1.900" fill="none"/>
<rect x="1235" y="42" width="6" height="2" fill="#5a5a5a"/>
<path d="M1255,38 V35.5 H1261.5 V41 H1259" fill="none" stroke="#5a5a5a" stroke-width="1.4"/><path d="M1252.5,38.5 h6 v5 h-6 z M1252.5,39.5 h6" fill="none" stroke="#5a5a5a" stroke-width="1.4"/>
<path d="M1271.5,36.5 l7,7 M1278.5,36.5 l-7,7" stroke="#5a5a5a" stroke-width="2.2" fill="none"/>
<path d="M1263,58 h12 a2,2 0 0 1 2,2 v8 a2,2 0 0 1 -2,2 h-7 v3.5 l-3.5,-3.5 h-1.5 a2,2 0 0 1 -2,-2 v-8 a2,2 0 0 1 2,-2 z" fill="#4c70b4"/>
<path d="M1259.5,710 v7 l-4,-3.5 z M1272.5,710 v7 l4,-3.5 z" fill="#b2b2b2"/>
<path d="M1271,744 L1284,731 M1275,744 L1284,735 M1279,744 L1284,739" stroke="#a8a8a8" stroke-width="1.2" fill="none"/><path d="M1272,744 L1284,732 M1276,744 L1284,736 M1280,744 L1284,740" stroke="#fff" stroke-width="1" fill="none"/>
<rect x="6.5" y="9.5" width="15" height="15" rx="1" fill="#195586" stroke="#3b7fb2" stroke-width="1"/><rect x="8" y="11" width="12" height="12" fill="none" stroke="#6fb0dc" stroke-width=".8" opacity=".7"/>
<path d="M10.5,21 V13.5 H18 V17.5 H13.5 V20.5 H18" fill="none" stroke="#fff" stroke-width="1.8"/>
<rect x="9.5" y="33.5" width="10" height="9" rx="1" fill="#fff" stroke="#3d7fe0" stroke-width="1" stroke-dasharray="1.5 .8"/><rect x="12.5" y="38.5" width="10" height="9" rx="1" fill="#fff" stroke="#3d7fe0" stroke-width="1"/><path d="M14,44 l1.5,-2 l1.5,3 l1.5,-3 l1.5,2" fill="none" stroke="#3d7fe0" stroke-width="1"/><path d="M11,37 l2,-1.5 l2,1.5 l2,-1" fill="none" stroke="#3d7fe0" stroke-width="1"/>
<rect x="16.5" y="58.5" width="12" height="10" rx="1" fill="#fff" stroke="#3474bc" stroke-width="1.100"/><rect x="17" y="59" width="11" height="2" fill="#c4dcf6"/><path d="M19.5,62 v5 M18,63.5 l1.5,-1.5 l1.5,1.5 M18,65.5 l1.5,1.5 l1.5,-1.5" fill="none" stroke="#8a9aaa" stroke-width="1"/>
<path d="M25.5,61.5 h3.0 v4.0 h4.0 v3.0 h-4.0 v4.0 h-3.0 v-4.0 h-4.0 v-3.0 h4.0 z" fill="#1fd51f" stroke="#0c9a0c" stroke-width="1" stroke-linejoin="miter"/><path d="M26.5,62.5 h1.0" fill="none" stroke="#a8f8a8" stroke-width="1" opacity=".7"/>
<path d="M36,65 h5 l-2.5,3 z" fill="#000" shape-rendering="auto"/>
<rect x="51.5" y="58.5" width="13" height="10" rx="1" fill="#fff" stroke="#3474bc" stroke-width="1.100"/><rect x="52" y="59" width="12" height="2" fill="#c4dcf6"/>
<rect x="54.5" y="63.5" width="13" height="10" rx="1" fill="#fff" stroke="#3474bc" stroke-width="1.100"/>
<rect x="51.5" y="58.5" width="13" height="10" rx="1" fill="#fff" stroke="#3474bc" stroke-width="1.100"/><rect x="52" y="59" width="12" height="2" fill="#c4dcf6"/>
<path d="M54,62 v4 M55,65.5 h7 M60.500,64 l1.500,1.500 l-1.500,1.500 M57,70.500 h8 M58.500,69 l-1.500,1.500 l1.500,1.500 M63.500,69 l1.500,1.500 l-1.500,1.500" fill="none" stroke="#7f95ad" stroke-width="1"/>
<path d="M71,65 h5 l-2.5,3 z" fill="#000" shape-rendering="auto"/>
<rect x="93.500" y="58.500" width="15" height="15" rx="2" fill="#fff" stroke="url(#blu)" stroke-width="1.300"/><rect x="94.500" y="59.500" width="13" height="2" fill="#9cc4f0"/>
<path d="M95.500,64 l3,-3.300 l3,3.300 h-1.800 v2.500 h-2.400 v-2.500 z" fill="#22b022" stroke="#0e8a0e" stroke-width=".5"/><path d="M103,63.500 h4 M103,66 h4 M95,69.500 h4 M95,71.500 h4" stroke="#d8d8d8" stroke-width="1"/>
<path d="M99.800,68.500 h1.800 v-2.500 h2.400 v2.500 h1.800 l-3,3.300 z" fill="#f06030" stroke="#d04010" stroke-width=".5"/>
<circle cx="129.5" cy="66.500" r="5" fill="none" stroke="#666" stroke-width="1.300"/><path d="M129.500,59 v15 M122,66.500 h15" stroke="#6e6e6e" stroke-width="1.200"/><circle cx="129.5" cy="66.500" r="1" fill="#e0e0e0"/>
<path d="M148.500,60 a1.500,1.500 0 0 1 1.500,-1.500 h3 l1.500,1.500 h4 a1,1 0 0 1 1,1 v6 h-11 z" fill="url(#yel)" stroke="#d8a020" stroke-width="1"/>
<path d="M160.500,62 l1.700,3.600 l3.900,.5 l-2.900,2.700 l.8,3.900 l-3.500,-1.900 l-3.500,1.900 l.8,-3.900 l-2.900,-2.700 l3.900,-.5 z" fill="#f8d840" stroke="#c89010" stroke-width="1" stroke-linejoin="round"/>
<path d="M152.500,68.500 v5" stroke="#444" stroke-width="1" stroke-dasharray="1 1"/>
<rect x="177.500" y="59.500" width="15" height="13" rx="2" fill="#fff" stroke="#2f6fc4" stroke-width="1.200"/><rect x="178.500" y="60.500" width="3" height="11" fill="#2f5fa8"/>
<path d="M183,62.500 h9 M183,65 h9 M183,67.500 h9 M183,70 h9" stroke="#a8c4f0" stroke-width="1"/><rect x="182" y="61.800" width="1.500" height="1.500" fill="#e02020"/><rect x="182" y="64.300" width="1.500" height="1.500" fill="#222"/><rect x="182" y="66.800" width="1.500" height="1.500" fill="#222"/><rect x="182" y="69.300" width="1.500" height="1.500" fill="#e02020"/><rect x="179.500" y="61.500" width="1" height="1.500" fill="#111"/>
<rect x="205.500" y="58.500" width="12" height="13" fill="#fbfaf6" stroke="#c8c4b8" stroke-width="1"/><path d="M208.500,60 v8 M207,62 h3 M214.500,60 v7 M213,61.500 h3" stroke="#666" stroke-width="1"/>
<path d="M216.500,70 l5.500,5" stroke="#c8a020" stroke-width="2.600" stroke-linecap="round"/><circle cx="213.300" cy="66.600" r="4.300" fill="#b8d8f4" fill-opacity=".85" stroke="#6fa8e0" stroke-width="1.300"/><rect x="211.500" y="64" width="3" height="5" fill="#8a9aa8" opacity=".8"/>
<path d="M240.500,58.500 h7.500 l3.500,3.500 v9.500 h-11 z" fill="#fbfbfb" stroke="#7c7c7c" stroke-width="1"/><path d="M248,58.500 v3.500 h3.500" fill="none" stroke="#8a8a8a" stroke-width="1"/><path d="M242.500,61.500 h3 M242.500,64.500 h6 M242.500,66.500 h6 M242.500,68.500 h3" stroke="#555" stroke-width="1"/>
<path d="M248.5,64.5 h3.0 v4.0 h4.0 v3.0 h-4.0 v4.0 h-3.0 v-4.0 h-4.0 v-3.0 h4.0 z" fill="#1fd51f" stroke="#0c9a0c" stroke-width="1" stroke-linejoin="miter"/><path d="M249.5,65.5 h1.0" fill="none" stroke="#a8f8a8" stroke-width="1" opacity=".7"/>
<rect x="-5.400" y="-5.400" width="10.800" height="10.800" rx="1.800" transform="translate(347.5,65.700) rotate(45)" fill="#f8d040" stroke="#d8a41c" stroke-width="1.300"/><rect x="-3.600" y="-3.600" width="7.200" height="7.200" rx="1" transform="translate(347.5,65.700) rotate(45)" fill="none" stroke="#fff0a0" stroke-width="1" opacity=".8"/><rect x="346.700" y="61.500" width="1.800" height="5" fill="#222"/><rect x="346.700" y="68" width="1.800" height="1.800" fill="#222"/>
<path d="M368.500,64.500 L383,64.500 L382.500,69 L377.500,73.500 L373,73.500 L369.500,70 Z" fill="url(#yel)" stroke="#d8a828" stroke-width=".7"/>
<ellipse cx="375.5" cy="63.600" rx="8" ry="2.700" fill="#58a8de" stroke="#3f8cc8" stroke-width=".6"/><ellipse cx="375" cy="61" rx="4.200" ry="3" fill="#62b2e6"/><ellipse cx="374" cy="60" rx="2.200" ry="1.200" fill="#bfe2f8" opacity=".8"/>
<circle cx="380" cy="69.700" r="4" fill="#1fb01f" stroke="#0f8a0f" stroke-width=".8"/><path d="M378.700,67.500 v4.400 l3.400,-2.200 z" fill="#fff"/>
<path d="M468.5,60 V74.0 M466.0,71.5 H479.5" fill="none" stroke="#5a5a5a" stroke-width="1.2"/><path d="M466.7,62.2 L468.5,59.7 L470.3,62.2 M477.3,69.7 L479.7,71.5 L477.3,73.3" fill="none" stroke="#5a5a5a" stroke-width="1.1"/>
<path d="M474.500,62 v8 M474.500,62.500 h2.500 M472,69 h2.500" fill="none" stroke="#18a018" stroke-width="1.500"/>
<path d="M496.5,60 V74.0 M494.0,71.5 H507.5" fill="none" stroke="#5a5a5a" stroke-width="1.2"/><path d="M494.7,62.2 L496.5,59.7 L498.3,62.2 M505.3,69.7 L507.7,71.5 L505.3,73.3" fill="none" stroke="#5a5a5a" stroke-width="1.1"/>
<path d="M502.500,58.500 v11.500" stroke="#18a018" stroke-width="1.300"/><rect x="500.500" y="60.500" width="4" height="6.500" fill="#30d030" stroke="#18a018" stroke-width="1"/>
<path d="M524.5,60 V74.0 M522.0,71.5 H535.5" fill="none" stroke="#5a5a5a" stroke-width="1.2"/><path d="M522.7,62.2 L524.5,59.7 L526.3,62.2 M533.3,69.7 L535.7,71.5 L533.3,73.3" fill="none" stroke="#5a5a5a" stroke-width="1.1"/>
<path d="M523,68.500 q3,-1 5,-4.500 q2,-2.500 4,0 q1.500,2 3.500,2.500" fill="none" stroke="#30a030" stroke-width="1.300"/>
<path d="M564,68 l5.500,5" stroke="#d8b020" stroke-width="2.800" stroke-linecap="round"/><path d="M564,68 l5.500,5" stroke="#f8e060" stroke-width="1" stroke-linecap="round"/>
<circle cx="560" cy="63.800" r="5.300" fill="url(#lens)" stroke="#3f86d8" stroke-width="1.500"/>
<path d="M557,63.800 h6" stroke="#3f7fd0" stroke-width="1.800"/>
<path d="M560,60.800 v6" stroke="#3f7fd0" stroke-width="1.800"/>
<path d="M592,68 l5.500,5" stroke="#d8b020" stroke-width="2.800" stroke-linecap="round"/><path d="M592,68 l5.500,5" stroke="#f8e060" stroke-width="1" stroke-linecap="round"/>
<circle cx="588" cy="63.800" r="5.300" fill="url(#lens)" stroke="#3f86d8" stroke-width="1.500"/>
<path d="M585,63.800 h6" stroke="#3f7fd0" stroke-width="1.800"/>
<path d="M620.5,60 V74.0 M618.0,71.5 H631.5" fill="none" stroke="#5a5a5a" stroke-width="1.2"/><path d="M618.7,62.2 L620.5,59.7 L622.3,62.2 M629.3,69.7 L631.7,71.5 L629.3,73.3" fill="none" stroke="#5a5a5a" stroke-width="1.1"/>
<path d="M625.500,62 v7 l3.800,-3.500 z" fill="#7fe07f" stroke="#18a018" stroke-width="1.200" stroke-linejoin="round"/>
<path d="M648.5,60 V74.0 M646.0,71.5 H659.5" fill="none" stroke="#5a5a5a" stroke-width="1.2"/><path d="M646.7,62.2 L648.5,59.7 L650.3,62.2 M657.3,69.7 L659.7,71.5 L657.3,73.3" fill="none" stroke="#5a5a5a" stroke-width="1.1"/>
<path d="M654.500,60 v10" stroke="#2070c0" stroke-width="1.500"/><path d="M660.500,65.500 h-4 M658.500,63.500 l-2.500,2 l2.500,2" fill="none" stroke="#e04010" stroke-width="1.300"/>
<rect x="679.500" y="60.500" width="8" height="11" fill="#f0f0f0" stroke="#8a8a8a" stroke-width="1"/><path d="M682.500,58.500 h5 l3,3 v8.500 h-8 z" fill="#fcfcfc" stroke="#8a8a8a" stroke-width="1"/><path d="M685.500,62 q-1.800,0 -1.800,2 v3.500" fill="none" stroke="#555" stroke-width="1"/>
<path d="M687.5,64.5 h3.0 v4.0 h4.0 v3.0 h-4.0 v4.0 h-3.0 v-4.0 h-4.0 v-3.0 h4.0 z" fill="#1fd51f" stroke="#0c9a0c" stroke-width="1" stroke-linejoin="miter"/><path d="M688.5,65.5 h1.0" fill="none" stroke="#a8f8a8" stroke-width="1" opacity=".7"/>
<path d="M697,65 h5 l-2.5,3 z" fill="#000" shape-rendering="auto"/>
<circle cx="721" cy="66" r="7.300" fill="#1f6fd0" stroke="#0f4fa8" stroke-width="1"/><circle cx="721" cy="66" r="5" fill="#f4f8ff"/><path d="M721,62.500 v3.500 h2.500" fill="none" stroke="#333" stroke-width="1.200"/><circle cx="719" cy="61" r="3" fill="#fff" opacity=".25"/>
<path d="M732,65 h5 l-2.5,3 z" fill="#000" shape-rendering="auto"/>
<rect x="748.500" y="59.500" width="15" height="13" rx="1" fill="#fff" stroke="#2f6fc4" stroke-width="1.500"/><rect x="749" y="60" width="14" height="2" fill="#9cc4f0"/><path d="M749,66.800 h14" stroke="#2f6fc4" stroke-width="1.200"/><path d="M750.500,65 l2.500,-.5 l2,-1.500 l2.500,.8 l2,-1.200 l2,.2" fill="none" stroke="#b02010" stroke-width="1.200"/><path d="M750.500,70.500 l2.500,-.3 l2,-1 l2,1 l2.500,-2 l2,2" fill="none" stroke="#20a020" stroke-width="1.200"/>
<path d="M767,65 h5 l-2.5,3 z" fill="#000" shape-rendering="auto"/>
<path d="M21,85.500 v12 l3,-2.800 l2.300,5 l2,-1 l-2.300,-4.800 l4,-.2 z" fill="#5a5a5a"/>
<path d="M53.500,86 v6 M53.500,95 v6 M46,93.500 h6 M55,93.500 h6" stroke="#5a5a5a" stroke-width="1.200"/>
<path d="M87.500,87 v13" stroke="#5a5a5a" stroke-width="1.300"/><path d="M110,93.500 h12" stroke="#5a5a5a" stroke-width="1.300"/><path d="M138,99.800 L150,87.800" stroke="#5a5a5a" stroke-width="1.300"/>
<path d="M164,96.500 l10.500,-10.500 M166,98.500 l11.500,-11.500 M168,100.500 l10,-10 M166.500,92 l3.500,7 M170,88.500 l3.500,7 M174,85.500 l3,6" fill="none" stroke="#505050" stroke-width="1.250"/><path d="M175.500,97.500 h3.500 M175.500,99.500 h3 M175.500,101.500 h3.500 M175.500,97.500 v4" fill="none" stroke="#333" stroke-width="1.100"/>
<path d="M193,86.500 h13 M193,90 h13 M193,93.500 h13 M193,97.500 h9" stroke="#5a5a5a" stroke-width="1" stroke-dasharray="1 1"/><path d="M203.500,97.500 h3.500 M203.500,99.500 h3 M203.500,97.500 v4.500" fill="none" stroke="#333" stroke-width="1.100"/>
<rect x="250.500" y="87.500" width="11" height="12" fill="none" stroke="#5a5a5a" stroke-width="1" stroke-dasharray="1 1" shape-rendering="crispEdges"/>
<path d="M280.500,87 l3,3 l-3,3 l-3,-3 z M287.500,93.500 l3.500,3.300 l-3.500,3.300 l-3.500,-3.300 z" fill="#5a5a5a"/><path d="M279,95.500 l2,2.500 l6,-7" fill="none" stroke="#5a5a5a" stroke-width="1.200"/>
<path d="M294,92 h5 l-2.5,3 z" fill="#000" shape-rendering="auto"/>
</g></svg>
<span class="t" style="left:27px;top:10.17px;font-size:12.5px;line-height:15px;color:#fff;font-weight:bold;transform:scaleX(0.9662);transform-origin:0 0;">142420: MetaTrader 4 - RoboForex - [NZDUSD,Daily]</span>
<span class="t" style="left:31px;top:34.69px;font-size:11px;line-height:13px;color:#000;transform:scaleX(1.0352);transform-origin:0 0;">Файл</span>
<span class="t" style="left:76px;top:34.69px;font-size:11px;line-height:13px;color:#000;transform:scaleX(0.9294);transform-origin:0 0;">Вид</span>
<span class="t" style="left:110px;top:34.69px;font-size:11px;line-height:13px;color:#000;transform:scaleX(1.0271);transform-origin:0 0;">Вставка</span>
<span class="t" style="left:168px;top:34.69px;font-size:11px;line-height:13px;color:#000;transform:scaleX(1.0061);transform-origin:0 0;">Графики</span>
<span class="t" style="left:228px;top:34.69px;font-size:11px;line-height:13px;color:#000;transform:scaleX(0.9822);transform-origin:0 0;">Сервис</span>
<span class="t" style="left:281px;top:34.69px;font-size:11px;line-height:13px;color:#000;transform:scaleX(1.0171);transform-origin:0 0;">Окно</span>
<span class="t" style="left:323px;top:34.69px;font-size:11px;line-height:13px;color:#000;">Справка</span>
<span class="t" style="left:260.5px;top:59.69px;font-size:11px;line-height:13px;color:#000;transform:scaleX(0.9844);transform-origin:0 0;">Новый Ордер</span>
<span class="t" style="left:390px;top:59.69px;font-size:11px;line-height:13px;color:#000;transform:scaleX(1.0140);transform-origin:0 0;">Советники</span>
<span class="t" style="left:224px;top:86.52px;font-size:11.5px;line-height:14px;color:#5a5a5a;font-weight:bold;transform:scaleX(0.9624);transform-origin:0 0;">A</span>
<span class="t" style="left:252.3px;top:87.49px;font-size:11px;line-height:13px;color:#5a5a5a;font-weight:bold;transform:scaleX(1.1137);transform-origin:0 0;">T</span>
<span class="t" style="left:320.5px;top:88.21px;font-size:9.5px;line-height:11px;color:#555;transform:scaleX(0.9467);transform-origin:0 0;">M1</span>
<span class="t" style="left:348.5px;top:88.21px;font-size:9.5px;line-height:11px;color:#555;transform:scaleX(0.9467);transform-origin:0 0;">M5</span>
<span class="t" style="left:374.6px;top:88.21px;font-size:9.5px;line-height:11px;color:#555;transform:scaleX(0.9413);transform-origin:0 0;">M15</span>
<span class="t" style="left:402.5px;top:88.21px;font-size:9.5px;line-height:11px;color:#555;transform:scaleX(0.9467);transform-origin:0 0;">M30</span>
<span class="t" style="left:433.5px;top:88.21px;font-size:9.5px;line-height:11px;color:#555;transform:scaleX(0.9460);transform-origin:0 0;">H1</span>
<span class="t" style="left:460.7px;top:88.21px;font-size:9.5px;line-height:11px;color:#555;transform:scaleX(0.9707);transform-origin:0 0;">H4</span>
<span class="t" style="left:489.5px;top:88.21px;font-size:9.5px;line-height:11px;color:#555;transform:scaleX(0.9460);transform-origin:0 0;">D1</span>
<span class="t" style="left:517.5px;top:88.21px;font-size:9.5px;line-height:11px;color:#555;transform:scaleX(0.9474);transform-origin:0 0;">W1</span>
<span class="t" style="left:543.7px;top:88.21px;font-size:9.5px;line-height:11px;color:#555;transform:scaleX(0.9674);transform-origin:0 0;">MN</span>
<span class="t" style="left:1266px;top:57.36px;font-size:10.5px;line-height:13px;color:#fff;transform:scaleX(1.1979);transform-origin:0 0;">4</span>
<span class="t" style="left:23.7px;top:112.78px;font-size:9.3px;line-height:11px;color:#000;transform:scaleX(1.0212);transform-origin:0 0;">NZDUSD,Daily</span>
<span class="t" style="left:93px;top:112.78px;font-size:9.3px;line-height:11px;color:#000;transform:scaleX(0.9959);transform-origin:0 0;">0.7762 0.7831 0.7736 0.7815</span>
<span class="t" style="left:17.6px;top:705.86px;font-size:10.5px;line-height:13px;color:#7a786a;transform:scaleX(0.9307);transform-origin:0 0;">GBPUSD,M15</span>
<span class="t" style="left:103px;top:705.86px;font-size:10.5px;line-height:13px;color:#7a786a;transform:scaleX(0.9455);transform-origin:0 0;">EURUSD,M15</span>
<span class="t" style="left:190.6px;top:705.86px;font-size:10.5px;line-height:13px;color:#7a786a;transform:scaleX(0.9482);transform-origin:0 0;">USDJPY,H4</span>
<span class="t" style="left:266.8px;top:705.86px;font-size:10.5px;line-height:13px;color:#7a786a;transform:scaleX(0.9425);transform-origin:0 0;">AUDUSD,H4</span>
<span class="t" style="left:347.7px;top:705.86px;font-size:10.5px;line-height:13px;color:#7a786a;transform:scaleX(0.9281);transform-origin:0 0;">GBPCHF,H1</span>
<span class="t" style="left:425.6px;top:705.86px;font-size:10.5px;line-height:13px;color:#7a786a;transform:scaleX(0.9406);transform-origin:0 0;">GBPJPY,Daily</span>
<span class="t" style="left:510px;top:705.86px;font-size:10.5px;line-height:13px;color:#7a786a;transform:scaleX(0.9796);transform-origin:0 0;">EURGBP,Monthly</span>
<span class="t" style="left:613.5px;top:705.86px;font-size:10.5px;line-height:13px;color:#000;transform:scaleX(0.9498);transform-origin:0 0;">NZDUSD,Daily</span>
<span class="t" style="left:702px;top:705.86px;font-size:10.5px;line-height:13px;color:#7a786a;transform:scaleX(0.9571);transform-origin:0 0;">EURJPY,H4</span>
<span class="t" style="left:778.5px;top:705.86px;font-size:10.5px;line-height:13px;color:#7a786a;transform:scaleX(0.9392);transform-origin:0 0;">USDCAD,H1</span>
<span class="t" style="left:858.6px;top:705.86px;font-size:10.5px;line-height:13px;color:#7a786a;transform:scaleX(0.9688);transform-origin:0 0;">AUDNZD,M30</span>
<span class="t" style="left:945.6px;top:705.86px;font-size:10.5px;line-height:13px;color:#7a786a;transform:scaleX(0.9660);transform-origin:0 0;">USDCHF,Daily</span>
<span class="t" style="left:6.5px;top:729.19px;font-size:11px;line-height:13px;color:#000;transform:scaleX(0.9833);transform-origin:0 0;">Для справки, нажмите F1</span>
<span class="t" style="left:1178.6px;top:729.19px;font-size:11px;line-height:13px;color:#000;transform:scaleX(0.9952);transform-origin:0 0;">436/2 kb</span>
</body></html>
